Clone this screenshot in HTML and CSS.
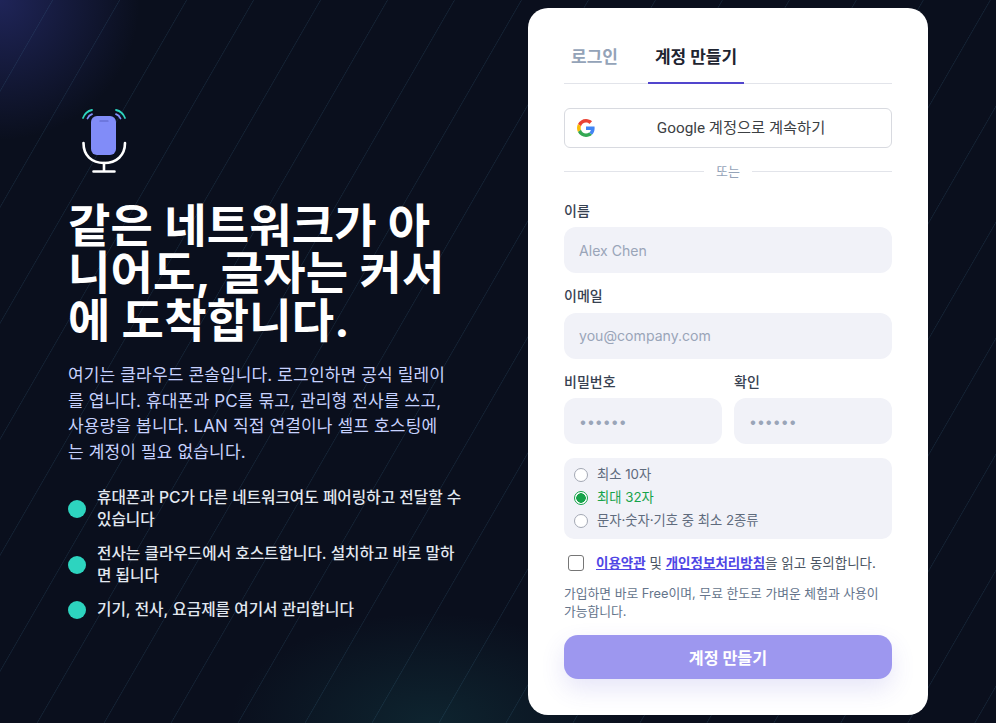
FILE: index.html
```html
<!DOCTYPE html>
<html lang="ko">
<head>
<meta charset="utf-8">
<title>계정 만들기</title>
<link rel="stylesheet" href="styles.css">
</head>
<body>
<main class="page">
  <section class="hero">
    <svg class="logo" viewBox="0 0 72 72" width="72" height="72" fill="none">
      <rect x="23" y="12" width="25" height="39" rx="6" fill="#818cf8"/>
      <path d="M32 17h8" stroke="#5b63c4" stroke-width="1.200" stroke-linecap="round"/>
      <path d="M15.500 39c0 12.500 8 20 20.500 20s21-7.500 21-20" stroke="#fff" stroke-width="2.600" stroke-linecap="round"/>
      <path d="M36 59v8M25.500 67.500h21" stroke="#fff" stroke-width="2.600" stroke-linecap="round"/>
      <path d="M15 14c1.500-4 4.500-7 9-8M57 14c-1.500-4-4.500-7-9-8" stroke="#2dd4bf" stroke-width="1.800" stroke-linecap="round"/>
      <path d="M19.500 14.500c.8-2 2.200-3.500 4.500-4.300M52.500 14.500c-.8-2-2.200-3.500-4.500-4.300" stroke="#818cf8" stroke-width="1.800" stroke-linecap="round"/>
    </svg>
    <h1 class="title">같은 네트워크가 아니어도, 글자는 커서에 도착합니다.</h1>
    <p class="lead">여기는 클라우드 콘솔입니다. 로그인하면 공식 릴레이를 엽니다. 휴대폰과 PC를 묶고, 관리형 전사를 쓰고, 사용량을 봅니다. LAN 직접 연결이나 셀프 호스팅에는 계정이 필요 없습니다.</p>
    <ul class="points">
      <li class="point"><span class="dot"></span><span>휴대폰과 PC가 다른 네트워크여도 페어링하고 전달할 수 있습니다</span></li>
      <li class="point"><span class="dot"></span><span>전사는 클라우드에서 호스트합니다. 설치하고 바로 말하면 됩니다</span></li>
      <li class="point"><span class="dot"></span><span>기기, 전사, 요금제를 여기서 관리합니다</span></li>
    </ul>
  </section>
  <section class="card">
    <div class="tabs">
      <button class="tab">로그인</button>
      <button class="tab tab-active">계정 만들기</button>
    </div>
    <button class="google">
      <svg viewBox="0 0 48 48" width="18" height="18">
        <path fill="#EA4335" d="M24 9.500c3.540 0 6.710 1.220 9.210 3.600l6.850-6.850C35.900 2.380 30.470 0 24 0 14.620 0 6.510 5.380 2.560 13.220l7.980 6.190C12.430 13.720 17.740 9.500 24 9.500z"/>
        <path fill="#4285F4" d="M46.980 24.550c0-1.570-.15-3.090-.38-4.550H24v9.020h12.940c-.58 2.960-2.260 5.480-4.780 7.180l7.730 6c4.510-4.180 7.090-10.360 7.090-17.650z"/>
        <path fill="#FBBC05" d="M10.530 28.590c-.48-1.450-.76-2.990-.76-4.590s.27-3.140.76-4.590l-7.980-6.190C.92 16.460 0 20.120 0 24c0 3.880.92 7.540 2.560 10.780l7.970-6.190z"/>
        <path fill="#34A853" d="M24 48c6.480 0 11.930-2.130 15.890-5.810l-7.730-6c-2.150 1.450-4.920 2.300-8.160 2.300-6.260 0-11.570-4.220-13.470-9.910l-7.980 6.190C6.510 42.620 14.620 48 24 48z"/>
      </svg>
      <span class="google-label">Google 계정으로 계속하기</span>
    </button>
    <div class="divider"><span class="divider-text">또는</span></div>
    <label class="field">
      <span class="label">이름</span>
      <input class="input" type="text" placeholder="Alex Chen">
    </label>
    <label class="field">
      <span class="label">이메일</span>
      <input class="input" type="email" placeholder="you@company.com">
    </label>
    <div class="pair">
      <label class="field">
        <span class="label">비밀번호</span>
        <input class="input" type="text" placeholder="••••••">
      </label>
      <label class="field">
        <span class="label">확인</span>
        <input class="input" type="text" placeholder="••••••">
      </label>
    </div>
    <ul class="rules">
      <li class="rule"><span class="radio"></span>최소 10자</li>
      <li class="rule rule-ok"><span class="radio radio-ok"></span>최대 32자</li>
      <li class="rule"><span class="radio"></span>문자·숫자·기호 중 최소 2종류</li>
    </ul>
    <label class="agree">
      <span class="check"></span>
      <span><a class="link" href="#">이용약관</a> 및 <a class="link" href="#">개인정보처리방침</a>을 읽고 동의합니다.</span>
    </label>
    <p class="note">가입하면 바로 Free이며, 무료 한도로 가벼운 체험과 사용이 가능합니다.</p>
    <button class="submit">계정 만들기</button>
  </section>
</main>
</body>
</html>
```
FILE: styles.css
```css
* { box-sizing: border-box; }
html, body { margin: 0; height: 100%; }
body {
  font-family: Inter, "Noto Sans CJK KR", sans-serif;
  background-color: #0a0f1d;
  background-image:
    repeating-linear-gradient(120deg, transparent 0, transparent 45px, rgba(70, 130, 165, .18) 45.500px, transparent 46.500px, transparent 58px),
    radial-gradient(circle at 0 0, rgba(60, 66, 170, .42) 0, rgba(60, 66, 170, 0) 140px),
    radial-gradient(ellipse 200px 110px at 430px 723px, rgba(30, 120, 120, .2) 0, rgba(30, 120, 120, 0) 100%);
  overflow: hidden;
}
.page {
  height: 100vh;
  display: flex;
  justify-content: center;
  align-items: center;
  gap: 60px;
}
.hero { width: 400px; color: #fff; padding-top: 2px; }
.logo { display: block; margin-bottom: 26px; }
.title {
  margin: 0 0 19px;
  font-size: 46px;
  line-height: 47.500px;
  font-weight: 700;
  letter-spacing: .2px;
}
.lead {
  margin: 0 0 22px;
  max-width: 381px;
  font-size: 17px;
  line-height: 25.500px;
  letter-spacing: .15px;
  color: #c7d2fe;
}
.points { list-style: none; margin: 0; padding: 0; display: flex; flex-direction: column; gap: 12px; }
.point {
  display: flex;
  align-items: center;
  gap: 11px;
  font-size: 15.700px;
  line-height: 22px;
  font-weight: 500;
  color: #e2e8f0;
}
.dot { flex: none; width: 18px; height: 18px; border-radius: 50%; background: #2dd4bf; }
.card {
  width: 400px;
  padding: 36px;
  background: #fff;
  border-radius: 20px;
}
.tabs { display: flex; gap: 23px; border-bottom: 1px solid #e2e4ea; height: 40px; margin-bottom: 24px; }
.tab {
  height: 40px;
  padding: 1px 7px 13px;
  border: 0;
  border-bottom: 2px solid transparent;
  background: none;
  font: 700 17px/24px Inter, "Noto Sans CJK KR", sans-serif;
  color: #94a3b8;
}
.tab-active { color: #1e2430; border-bottom-color: #5145cd; }
.google {
  width: 100%;
  height: 40px;
  display: flex;
  align-items: center;
  gap: 8px;
  padding: 0 12px;
  background: #fff;
  border: 1px solid #d8dae0;
  border-radius: 6px;
  font: 400 15.300px/20px Roboto, "Noto Sans CJK KR", sans-serif;
  color: #3c4043;
}
.google-label { flex: 1; text-align: center; }
.divider {
  display: flex;
  align-items: center;
  gap: 12px;
  margin: 14px 0 21.500px;
  height: 18px;
  font-size: 13px;
  color: #94a3b8;
}
.divider-text { margin-bottom: 2px; }
.divider::before, .divider::after { content: ""; flex: 1; height: 1px; background: #e2e4ea; }
.field { display: block; margin-bottom: 14px; min-width: 0; }
.label { display: block; font-size: 14px; font-weight: 500; line-height: 17.500px; margin-bottom: 8px; color: #374151; }
.input {
  display: block;
  width: 100%;
  height: 46px;
  padding: 0 15px;
  border: 0;
  border-radius: 12px;
  background: #f1f2f8;
  font: 14.100px Inter, "Noto Sans CJK KR", sans-serif;
}
.input::placeholder { color: #9aa5b8; opacity: 1; }
.pair { display: grid; grid-template-columns: 1fr 1fr; gap: 12px; }
.rules {
  list-style: none;
  margin: 0 0 14px;
  padding: 5px 10px;
  height: 81px;
  background: #f1f2f8;
  border-radius: 10px;
}
.rule { display: flex; align-items: center; gap: 9px; font-size: 13.300px; line-height: 23px; color: #5f6b7d; }
.rule-ok { color: #16a34a; }
.radio { flex: none; width: 14px; height: 14px; border-radius: 50%; border: 1px solid #a3a8b4; background: #fff; }
.radio-ok { border-color: #16a34a; background: radial-gradient(circle, #16a34a 0, #16a34a 4.500px, #fff 5px); }
.agree { display: flex; align-items: center; gap: 12px; padding-left: 4px; font-size: 13.500px; line-height: 20px; color: #4b5563; }
.check { flex: none; width: 16px; height: 16px; border: 1px solid #767676; border-radius: 3px; background: #fff; }
.link { color: #4f46e5; font-weight: 600; }
.note { margin: 12px 0 14px; font-size: 12.800px; line-height: 18px; color: #64748b; word-break: keep-all; }
.submit {
  display: block;
  width: 100%;
  height: 44px;
  border: 0;
  border-radius: 14px;
  background: #9d97ef;
  box-shadow: 0 10px 24px rgba(81, 69, 205, .14);
  color: #fff;
  font: 700 16.200px Inter, "Noto Sans CJK KR", sans-serif;
}
```
